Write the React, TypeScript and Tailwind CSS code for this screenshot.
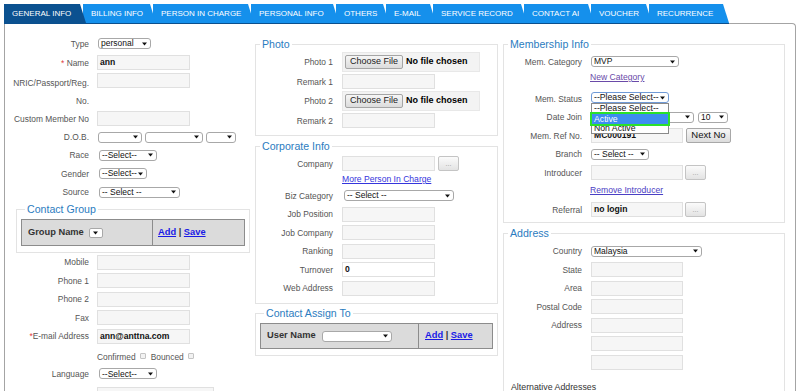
import React from "react";

type Tab = { label: string; w: string; z: string; active?: boolean };

const tabs: Tab[] = [
  { label: "GENERAL INFO", w: "w-[82px]", z: "z-[10]", active: true },
  { label: "BILLING INFO", w: "w-[73px]", z: "z-[9]" },
  { label: "PERSON IN CHARGE", w: "w-[101px]", z: "z-[8]" },
  { label: "PERSONAL INFO", w: "w-[88px]", z: "z-[7]" },
  { label: "OTHERS", w: "w-[53px]", z: "z-[6]" },
  { label: "E-MAIL", w: "w-[50px]", z: "z-[5]" },
  { label: "SERVICE RECORD", w: "w-[94px]", z: "z-[4]" },
  { label: "CONTACT AI", w: "w-[70px]", z: "z-[3]" },
  { label: "VOUCHER", w: "w-[61px]", z: "z-[2]" },
  { label: "RECURRENCE", w: "w-[80px]", z: "z-[1]" },
];

const variants = {
  a: { label: "w-[85px] pr-[1px]", gap: "ml-[7px]" },
  b: { label: "w-[77px]", gap: "ml-[9px]" },
  c: { label: "w-[78px]", gap: "ml-[9px]" },
};

const Caret = () => (
  <svg width="5" height="4" viewBox="0 0 5 4" className="shrink-0">
    <path d="M0 0.5h5L2.5 3.5z" fill="#111" />
  </svg>
);

const Select = ({ w, text = "", cls = "" }: { w: string; text?: string; cls?: string }) => (
  <div
    className={`flex h-[11px] items-center justify-between rounded-[3px] border border-[#a8a8a8] bg-white pl-[2px] pr-[3px] text-[8.5px] leading-none text-[#111] ${w} ${cls}`}
  >
    <span className="whitespace-nowrap">{text}</span>
    <Caret />
  </div>
);

const Field = ({ w = "w-[93px]", value, white }: { w?: string; value?: string; white?: boolean }) => (
  <div
    className={`flex h-[15px] shrink-0 items-center border border-[#e0e0e0] px-[2px] text-[8.6px] font-bold text-[#111] ${
      white ? "bg-white" : "bg-[#f6f6f6]"
    } ${w}`}
  >
    {value}
  </div>
);

const Dots = () => (
  <div className="flex h-[15px] w-[21px] items-end justify-center rounded-[2px] border border-[#c4c4c4] bg-linear-to-b from-[#fbfbfb] to-[#e3e3e3] pb-[3px] text-[7px] leading-none text-[#999]">
    ...
  </div>
);

const FileBox = () => (
  <div className="flex h-[20px] w-[138px] items-center border border-[#e8e8e8] bg-[#f3f3f3] pl-[2px]">
    <div className="flex h-[14px] w-[58px] items-center justify-center rounded-[2px] border border-[#a5a5a5] bg-linear-to-b from-[#f6f6f6] to-[#dcdcdc] text-[9px] text-[#222]">
      Choose File
    </div>
    <span className="ml-[3px] text-[9px] font-bold text-black">No file chosen</span>
  </div>
);

const Row = ({
  v,
  h,
  label,
  children,
  start,
}: {
  v: "a" | "b" | "c";
  h: string;
  label?: React.ReactNode;
  children?: React.ReactNode;
  start?: boolean;
}) => (
  <div className={`flex ${h} ${start ? "items-start" : "items-center"}`}>
    <div className={`shrink-0 text-right text-[8.4px] leading-[12px] text-[#555] ${variants[v].label}`}>{label}</div>
    <div className={`flex items-center ${variants[v].gap}`}>{children}</div>
  </div>
);

const Box = ({ title, cls = "", children }: { title: string; cls?: string; children: React.ReactNode }) => (
  <fieldset className={`border border-[#e3e3e3] ${cls}`}>
    <legend className="ml-[4px] px-[2px] text-[10.6px] leading-[13px] text-[#2b7cc0]">{title}</legend>
    {children}
  </fieldset>
);

const AddSave = () => (
  <span className="text-[9.3px] font-bold text-[#333]">
    <span className="text-[#1a1ae6] underline">Add</span>
    {" | "}
    <span className="text-[#1a1ae6] underline">Save</span>
  </span>
);

const Check = () => (
  <span className="ml-[4px] mt-[1px] inline-block h-[6px] w-[6px] rounded-[1px] border border-[#c4c4c4] bg-[#f2f2f2]" />
);

export default function App() {
  return (
    <div className="flex h-[391px] w-[800px] flex-col overflow-hidden bg-white px-[4px] pt-[4px] font-['Liberation_Sans',Arial,sans-serif]">
      {/* Tabs */}
      <div className="relative z-10 -mb-px flex w-fit border-b border-[#0b4f8d]">
        {tabs.map((t, i) => (
          <div
            key={t.label}
            className={`relative flex h-[19px] shrink-0 items-center whitespace-nowrap pl-[8px] text-[8px] text-white [clip-path:polygon(0_0,calc(100%_-_6px)_0,100%_100%,0_100%)] ${t.w} ${t.z} ${
              i > 0 ? "-ml-[3px]" : ""
            } ${t.active ? "bg-[#0b5190]" : "bg-[#1590ec]"}`}
          >
            {t.label}
          </div>
        ))}
      </div>

      {/* Panel */}
      <div className="flex flex-1 rounded-tr-[4px] border-x border-t border-[#a4a4a4]">
        {/* Column 1 */}
        <div className="w-[245px] shrink-0 pt-[10px]">
          <Row v="a" h="h-[19px]" label="Type">
            <Select w="w-[53px]" text="personal" cls="ml-[1px]" />
          </Row>
          <Row
            v="a"
            h="h-[19px]"
            label={
              <>
                <span className="text-[#e03a3a]">*</span> Name
              </>
            }
          >
            <Field value="ann" />
          </Row>
          <div className="flex h-[37px] items-start">
            <div className="w-[85px] shrink-0 pr-[1px] pt-[2px] text-right text-[8.4px] leading-[18px] text-[#555]">
              NRIC/Passport/Reg.
              <br />
              No.
            </div>
            <div className="ml-[7px] mt-[1px]">
              <Field />
            </div>
          </div>
          <Row v="a" h="h-[19px]" label="Custom Member No">
            <Field />
          </Row>
          <Row v="a" h="h-[18px]" label="D.O.B.">
            <div className="ml-[1px] flex gap-[3px]">
              <Select w="w-[44px]" />
              <Select w="w-[58px]" />
              <Select w="w-[30px]" />
            </div>
          </Row>
          <Row v="a" h="h-[18px]" label="Race">
            <Select w="w-[58px]" text="--Select--" cls="ml-[2px]" />
          </Row>
          <Row v="a" h="h-[19px]" label="Gender">
            <Select w="w-[48px]" text="--Select--" cls="ml-[2px]" />
          </Row>
          <Row v="a" h="h-[18px]" label="Source">
            <Select w="w-[81px]" text="-- Select --" cls="ml-[2px]" />
          </Row>

          <Box title="Contact Group" cls="ml-[11px] mt-[1.5px] w-[234px] px-[4px] pb-[6px] pt-[3.5px]">
            <div className="flex h-[27px] border border-[#8c8c8c] bg-[#dbdbdb] text-[9.3px] font-bold">
              <div className="flex w-[131px] items-center border-r border-[#8c8c8c] pl-[6px] text-[#333]">
                Group Name
                <div className="ml-[5px] flex h-[10px] w-[14px] items-center justify-center rounded-[2px] border border-[#a8a8a8] bg-white">
                  <Caret />
                </div>
              </div>
              <div className="flex items-center pl-[5px]">
                <AddSave />
              </div>
            </div>
          </Box>

          <Row v="a" h="h-[18.5px]" label="Mobile">
            <Field />
          </Row>
          <Row v="a" h="h-[18.5px]" label="Phone 1">
            <Field />
          </Row>
          <Row v="a" h="h-[18.5px]" label="Phone 2">
            <Field />
          </Row>
          <Row v="a" h="h-[18.5px]" label="Fax">
            <Field />
          </Row>
          <Row
            v="a"
            h="h-[18.5px]"
            label={
              <>
                <span className="text-[#e03a3a]">*</span>E-mail Address
              </>
            }
          >
            <Field value="ann@anttna.com" />
          </Row>
          <div className="flex h-[19px] items-start pl-[92px] pt-[6px] text-[8.4px] leading-[10px] text-[#555]">
            Confirmed
            <Check />
            <span className="ml-[5px]">Bounced</span>
            <Check />
          </div>
          <Row v="a" h="h-[18.5px]" label="Language">
            <Select w="w-[58px]" text="--Select--" cls="ml-[2px]" />
          </Row>
          <div className="ml-[92px] mt-[4px]">
            <Field w="w-[117px]" />
          </div>
        </div>

        {/* Column 2 */}
        <div className="ml-[5px] w-[243px] shrink-0 pt-[14px]">
          <Box title="Photo" cls="pb-[5px] pt-[1px]">
            <Row v="b" h="h-[20px]" label="Photo 1">
              <FileBox />
            </Row>
            <Row v="b" h="h-[19px]" label="Remark 1">
              <Field />
            </Row>
            <Row v="b" h="h-[20px]" label="Photo 2">
              <FileBox />
            </Row>
            <Row v="b" h="h-[19px]" label="Remark 2">
              <Field />
            </Row>
          </Box>

          <Box title="Corporate Info" cls="mt-[4px] pb-[5px] pt-[1px]">
            <Row v="b" h="h-[19px]" label="Company">
              <Field />
              <div className="ml-[3px]">
                <Dots />
              </div>
            </Row>
            <div className="h-[13px] pl-[86px] text-[8.6px] leading-[13px] text-[#3535dc] underline">
              More Person In Charge
            </div>
            <Row v="b" h="h-[19px]" label="Biz Category">
              <Select w="w-[110px]" text="-- Select --" cls="ml-[2px]" />
            </Row>
            <Row v="b" h="h-[18.5px]" label="Job Position">
              <Field />
            </Row>
            <Row v="b" h="h-[18.5px]" label="Job Company">
              <Field />
            </Row>
            <Row v="b" h="h-[18.5px]" label="Ranking">
              <Field />
            </Row>
            <Row v="b" h="h-[18.5px]" label="Turnover">
              <Field value="0" white />
            </Row>
            <Row v="b" h="h-[18.5px]" label="Web Address">
              <Field />
            </Row>
          </Box>

          <Box title="Contact Assign To" cls="mt-[3px] px-[4px] pb-[6px] pt-[3.5px]">
            <div className="flex h-[26px] border border-[#8c8c8c] bg-[#dbdbdb] text-[9.3px] font-bold">
              <div className="flex w-[158px] items-center border-r border-[#8c8c8c] pl-[6px] text-[#333]">
                User Name
                <Select w="w-[70px]" cls="ml-[6px]" />
              </div>
              <div className="flex items-center pl-[6px]">
                <AddSave />
              </div>
            </div>
          </Box>
        </div>

        {/* Column 3 */}
        <div className="ml-[5px] w-[282px] shrink-0 pt-[14px]">
          <Box title="Membership Info" cls="pb-[3px] pt-[1px]">
            <Row v="c" h="h-[19px]" label="Mem. Category">
              <Select w="w-[88px]" text="MVP" />
            </Row>
            <div className="h-[18px] pl-[86px] text-[8.6px] leading-[12px] text-[#6a4aa8] underline">New Category</div>
            <Row v="c" h="h-[19px]" label="Mem. Status">
              <div className="relative -mt-[2px]">
                <div className="flex h-[11px] w-[78px] items-center justify-between rounded-[3px] border border-[#6f9ad6] bg-white pl-[2px] pr-[3px] text-[8.7px] leading-none text-[#111]">
                  <span className="whitespace-nowrap">--Please Select--</span>
                  <Caret />
                </div>
                <div className="absolute left-0 top-full z-20 w-[78px] border border-[#8a8a8a] bg-white text-[8.7px] leading-[9.5px] text-[#111]">
                  <div className="h-[9.5px] pl-[2px]">--Please Select--</div>
                  <div className="h-[10px] bg-[#3c8df0] pl-[2px] leading-[10px] text-white outline-2 outline-[#2ae02a]">Active</div>
                  <div className="h-[9.5px] pl-[2px]">Non Active</div>
                </div>
              </div>
            </Row>
            <Row v="c" h="h-[18px]" label="Date Join">
              <div className="flex gap-[3px]">
                <Select w="w-[49px]" />
                <Select w="w-[51px]" />
                <Select w="w-[30px]" text="10" cls="ml-[1px]" />
              </div>
            </Row>
            <Row v="c" h="h-[19px]" label="Mem. Ref No.">
              <Field w="w-[92px]" value="MC000191" />
              <div className="ml-[3px] flex h-[15px] w-[45px] items-center justify-center rounded-[2px] border border-[#a8a8a8] bg-linear-to-b from-[#f7f7f7] to-[#dcdcdc] text-[9.5px] text-[#111]">
                Next No
              </div>
            </Row>
            <Row v="c" h="h-[18px]" label="Branch">
              <Select w="w-[58px]" text="-- Select --" />
            </Row>
            <Row v="c" h="h-[19px]" label="Introducer">
              <Field w="w-[92px]" />
              <div className="ml-[2px]">
                <Dots />
              </div>
            </Row>
            <div className="h-[18px] pl-[86px] pt-[1px] text-[8.6px] leading-[14px] text-[#4a40c4] underline">
              Remove Introducer
            </div>
            <Row v="c" h="h-[19px]" label="Referral">
              <Field w="w-[92px]" value="no login" />
              <div className="ml-[2px]">
                <Dots />
              </div>
            </Row>
          </Box>

          <Box title="Address" cls="mt-[4px] pt-[1.5px]">
            <Row v="c" h="h-[19px]" label="Country">
              <Select w="w-[111px]" text="Malaysia" />
            </Row>
            <Row v="c" h="h-[18.5px]" label="State">
              <Field w="w-[92px]" />
            </Row>
            <Row v="c" h="h-[18.5px]" label="Area">
              <Field w="w-[92px]" />
            </Row>
            <Row v="c" h="h-[18.5px]" label="Postal Code">
              <Field w="w-[92px]" />
            </Row>
            <Row v="c" h="h-[18.5px]" label="Address">
              <Field w="w-[92px]" />
            </Row>
            <Row v="c" h="h-[18.5px]">
              <Field w="w-[92px]" />
            </Row>
            <Row v="c" h="h-[18.5px]">
              <Field w="w-[92px]" />
            </Row>
            <div className="mt-[9.5px] pl-[7px] text-[8.8px] leading-[12px] text-[#333]">Alternative Addresses</div>
          </Box>
        </div>
      </div>
    </div>
  );
}
